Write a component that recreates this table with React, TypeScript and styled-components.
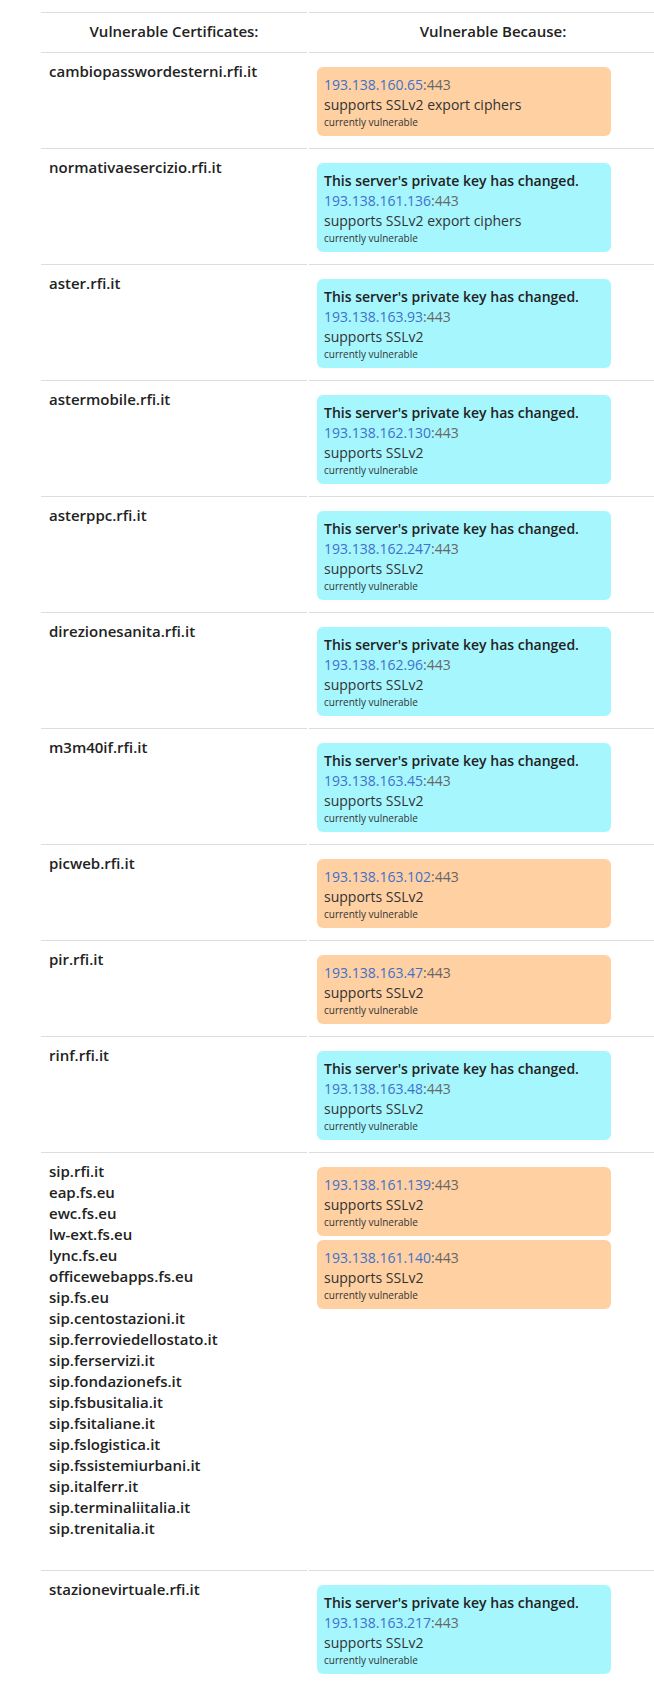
import React from "react";
import styled, { createGlobalStyle } from "styled-components";

type Finding = {
    ip: string;
    reason: string;
    keyChanged?: boolean;
};

type Entry = {
    hosts: string[];
    findings: Finding[];
    trailingBreak?: boolean;
};

const SSLV2 = "supports SSLv2";
const EXPORT = "supports SSLv2 export ciphers";

const entries: Entry[] = [
    { hosts: ["cambiopasswordesterni.rfi.it"], findings: [{ ip: "193.138.160.65", reason: EXPORT }] },
    { hosts: ["normativaesercizio.rfi.it"], findings: [{ ip: "193.138.161.136", reason: EXPORT, keyChanged: true }] },
    { hosts: ["aster.rfi.it"], findings: [{ ip: "193.138.163.93", reason: SSLV2, keyChanged: true }] },
    { hosts: ["astermobile.rfi.it"], findings: [{ ip: "193.138.162.130", reason: SSLV2, keyChanged: true }] },
    { hosts: ["asterppc.rfi.it"], findings: [{ ip: "193.138.162.247", reason: SSLV2, keyChanged: true }] },
    { hosts: ["direzionesanita.rfi.it"], findings: [{ ip: "193.138.162.96", reason: SSLV2, keyChanged: true }] },
    { hosts: ["m3m40if.rfi.it"], findings: [{ ip: "193.138.163.45", reason: SSLV2, keyChanged: true }] },
    { hosts: ["picweb.rfi.it"], findings: [{ ip: "193.138.163.102", reason: SSLV2 }] },
    { hosts: ["pir.rfi.it"], findings: [{ ip: "193.138.163.47", reason: SSLV2 }] },
    { hosts: ["rinf.rfi.it"], findings: [{ ip: "193.138.163.48", reason: SSLV2, keyChanged: true }] },
    {
        hosts: [
            "sip.rfi.it",
            "eap.fs.eu",
            "ewc.fs.eu",
            "lw-ext.fs.eu",
            "lync.fs.eu",
            "officewebapps.fs.eu",
            "sip.fs.eu",
            "sip.centostazioni.it",
            "sip.ferroviedellostato.it",
            "sip.ferservizi.it",
            "sip.fondazionefs.it",
            "sip.fsbusitalia.it",
            "sip.fsitaliane.it",
            "sip.fslogistica.it",
            "sip.fssistemiurbani.it",
            "sip.italferr.it",
            "sip.terminaliitalia.it",
            "sip.trenitalia.it",
        ],
        findings: [
            { ip: "193.138.161.139", reason: SSLV2 },
            { ip: "193.138.161.140", reason: SSLV2 },
        ],
        trailingBreak: true,
    },
    { hosts: ["stazionevirtuale.rfi.it"], findings: [{ ip: "193.138.163.217", reason: SSLV2, keyChanged: true }] },
];

const GlobalStyle = createGlobalStyle`
    html, body {
        margin: 0;
        padding: 0;
        background: #fff;
        overflow: hidden;
    }
    body {
        font-family: "Open Sans", "Liberation Sans", sans-serif;
        font-size: 15px;
        line-height: 1.4;
        color: #222;
    }
`;

const Page = styled.div`
    width: 100%;
    overflow: hidden;
    padding: 10px 0 0 39px;
    box-sizing: border-box;
`;

const Table = styled.table`
    width: 640px;
    border-collapse: separate;
    border-spacing: 2px;
    table-layout: fixed;
`;

// widths are content widths; 8px padding on each side comes on top
const HeadCell = styled.th<{ $width: number }>`
    width: ${p => p.$width}px;
    padding: 8px;
    border-top: 1px solid #ddd;
    font-weight: 600;
    text-align: center;
    color: #222;
`;

const Cell = styled.td`
    padding: 8px;
    border-top: 1px solid #ddd;
    vertical-align: top;
`;

const HostList = styled.div`
    display: flex;
    flex-direction: column;
    font-weight: 600;
    color: #222;
    line-height: 21px;
`;

const Spacer = styled.div`
    height: 21px;
`;

const FindingList = styled.div`
    display: flex;
    flex-direction: column;
    gap: 4px;
    padding: 6px 0 2px;
`;

const Box = styled.div<{ $changed: boolean }>`
    width: 294px;
    box-sizing: border-box;
    padding: 8px 8px 7px 7px;
    border-radius: 6px;
    background: ${p => (p.$changed ? "#a6f6fe" : "#fed0a2")};
    font-size: 14px;
    line-height: 20px;
    color: #333;
`;

const Title = styled.div`
    font-weight: 600;
    color: #222;
`;

const Address = styled.div`
    color: #666;
`;

const Ip = styled.span`
    color: #3f70cc;
`;

const Status = styled.div`
    font-size: 10px;
    line-height: 14px;
    color: #333;
`;

const FindingBox = ({ finding }: { finding: Finding }) => (
    <Box $changed={!!finding.keyChanged}>
        {finding.keyChanged && <Title>This server's private key has changed.</Title>}
        <Address>
            <Ip>{finding.ip}</Ip>:443
        </Address>
        <div>{finding.reason}</div>
        <Status>currently vulnerable</Status>
    </Box>
);

export default function App() {
    return (
        <>
            <GlobalStyle />
            <Page>
                <Table>
                    <thead>
                        <tr>
                            <HeadCell $width={250}>Vulnerable Certificates:</HeadCell>
                            <HeadCell $width={352}>Vulnerable Because:</HeadCell>
                        </tr>
                    </thead>
                    <tbody>
                        {entries.map(entry => (
                            <tr key={entry.hosts[0]}>
                                <Cell>
                                    <HostList>
                                        {entry.hosts.map(h => (
                                            <span key={h}>{h}</span>
                                        ))}
                                        {entry.trailingBreak && <Spacer />}
                                    </HostList>
                                </Cell>
                                <Cell>
                                    <FindingList>
                                        {entry.findings.map(f => (
                                            <FindingBox key={f.ip} finding={f} />
                                        ))}
                                    </FindingList>
                                </Cell>
                            </tr>
                        ))}
                    </tbody>
                </Table>
            </Page>
        </>
    );
}
